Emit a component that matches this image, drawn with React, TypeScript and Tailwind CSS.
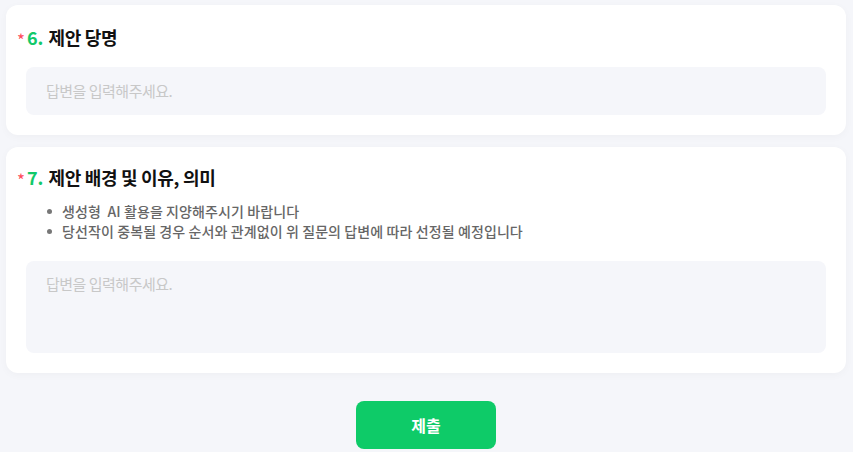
import React from "react";

const font = { fontFamily: '"Noto Sans CJK KR", "Noto Sans", sans-serif' };

function Title({ num, text }: { num: string; text: string }) {
  return (
    <div className="flex items-center h-[26px]">
      <span className="text-[#ff4b5c] text-[17px] leading-none mr-[2px] mt-[5px]">*</span>
      <span className="text-[#12c96a] text-[18px] font-bold leading-none mr-[5px]">{num}</span>
      <span className="text-[#111111] text-[18px] font-bold leading-none tracking-[-0.3px]">{text}</span>
    </div>
  );
}

export default function App() {
  return (
    <div className="w-[853px] h-[452px] bg-[#f5f6fa] pt-[5px] pl-[6px]" style={font}>
      <div className="w-[840px] flex flex-col gap-[12px]">
        <div className="bg-white rounded-[12px] shadow-[0_2px_8px_rgba(0,0,0,0.03)] pt-[19px] pb-[20px] px-[11px]">
          <Title num="6." text="제안 당명" />
          <div className="mt-[17px] mx-[9px] h-[48px] rounded-[8px] bg-[#f5f6fa] flex items-center px-[20px]">
            <span className="text-[15px] text-[#c8c8c8] tracking-[-0.5px]">답변을 입력해주세요.</span>
          </div>
        </div>
        <div className="bg-white rounded-[12px] shadow-[0_2px_8px_rgba(0,0,0,0.03)] pt-[17px] pb-[20px] px-[11px]">
          <Title num="7." text="제안 배경 및 이유, 의미" />
          <ul className="mt-[11px] ml-[30px] flex flex-col">
            {[
              "생성형  AI 활용을 지양해주시기 바랍니다",
              "당선작이 중복될 경우 순서와 관계없이 위 질문의 답변에 따라 선정될 예정입니다",
            ].map((t) => (
              <li key={t} className="flex items-center h-[20px] text-[14px] font-medium text-[#666666] tracking-[0.1px]">
                <span className="w-[5px] h-[5px] rounded-full bg-[#777777] mr-[10px] shrink-0" />
                <span className="whitespace-pre">{t}</span>
              </li>
            ))}
          </ul>
          <div className="mt-[20px] mx-[9px] h-[92px] rounded-[8px] bg-[#f5f6fa] px-[20px] pt-[10px]">
            <span className="text-[15px] text-[#c8c8c8] tracking-[-0.5px]">답변을 입력해주세요.</span>
          </div>
        </div>
      </div>
      <div className="w-[840px] flex justify-center mt-[28px]">
        <button className="w-[140px] h-[48px] rounded-[8px] bg-[#0ecb68] text-white text-[16px] font-bold">
          제출
        </button>
      </div>
    </div>
  );
}
